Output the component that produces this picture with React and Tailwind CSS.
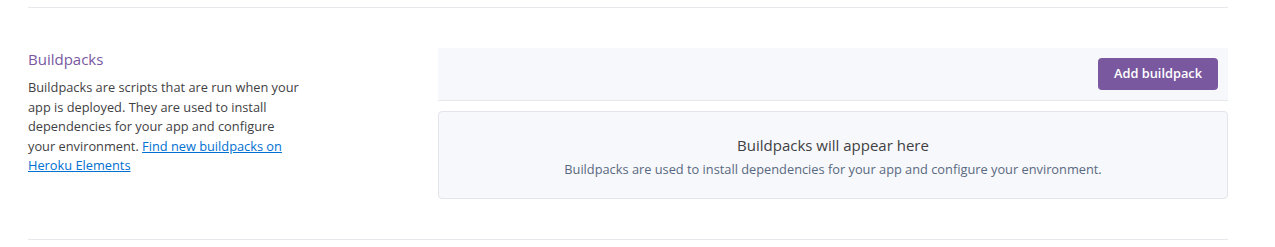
export default function App() {
  return (
    <div className="w-[1275px] h-[247px] bg-white pt-[7px] px-[28px] font-['Open_Sans','Noto_Sans',sans-serif]">
      <div className="w-[1200px] border-t border-b border-[#e7e8ec] grid grid-cols-[410px_790px] pt-[40px] pb-[40px]">
        <div>
          <h2 className="text-[15px] leading-[20px] text-[#79589f] mt-[1px]">Buildpacks</h2>
          <p className="w-[275px] mt-[9px] text-[12.8px] leading-[19.5px] text-[#3f3f44]">
            Buildpacks are scripts that are run when your app is deployed. They are used to install dependencies for your app and configure your environment.{" "}
            <a href="#" className="text-[#0070d2] underline">Find new buildpacks on Heroku Elements</a>
          </p>
        </div>
        <div className="flex flex-col gap-[10px]">
          <div className="h-[53px] bg-[#f7f8fb] border-b border-[#e7e8ec] flex items-center justify-end pr-[10px] pb-[1px]">
            <button className="h-[32px] px-[16px] rounded-[4px] bg-[#79589f] text-white text-[12.8px] font-semibold">Add buildpack</button>
          </div>
          <div className="h-[88px] rounded-[4px] border border-[#e3e5ea] bg-[#f7f8fb] flex flex-col items-center justify-center pt-[2px]">
            <div className="text-[15px] leading-[20px] text-[#3f3f44]">Buildpacks will appear here</div>
            <div className="mt-[5px] text-[12.8px] leading-[18px] text-[#596981]">Buildpacks are used to install dependencies for your app and configure your environment.</div>
          </div>
        </div>
      </div>
    </div>
  );
}
